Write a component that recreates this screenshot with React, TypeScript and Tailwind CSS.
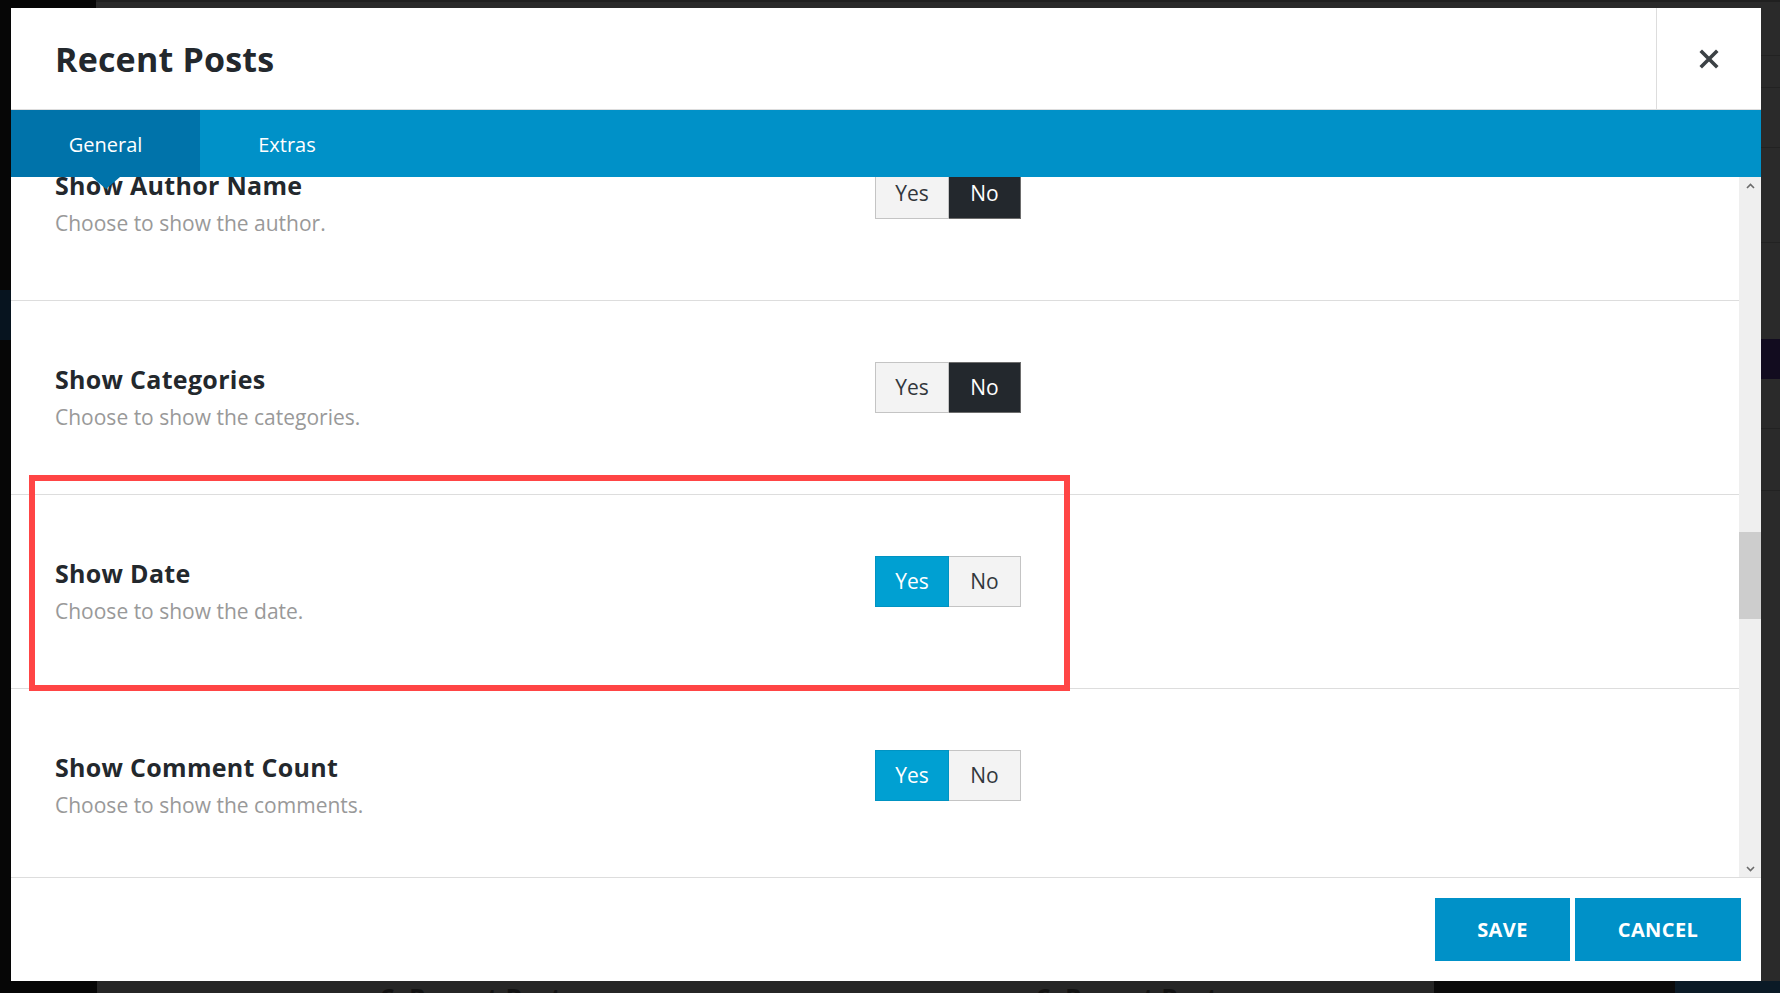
import { useState } from "react";

type Setting = { key: string; title: string; desc: string; value: boolean };

const initialSettings: Setting[] = [
    { key: "author", title: "Show Author Name", desc: "Choose to show the author.", value: false },
    { key: "categories", title: "Show Categories", desc: "Choose to show the categories.", value: false },
    { key: "date", title: "Show Date", desc: "Choose to show the date.", value: true },
    { key: "comments", title: "Show Comment Count", desc: "Choose to show the comments.", value: true },
];

function YesNo({ value, onChange }: { value: boolean; onChange: (v: boolean) => void }) {
    return (
        <div className="flex h-[51px] mt-[1px] text-[21px]">
            <button
                onClick={() => onChange(true)}
                className={
                    value
                        ? "w-[74px] h-full flex items-center justify-center bg-[#00a0d2] border border-[#0093c2] text-white"
                        : "w-[74px] h-full flex items-center justify-center bg-[#f3f3f3] border border-[#c4c4c4] text-[#32373c]"
                }
            >
                Yes
            </button>
            <button
                onClick={() => onChange(false)}
                className={
                    value
                        ? "w-[72px] h-full flex items-center justify-center bg-[#f3f3f3] border border-l-0 border-[#c4c4c4] text-[#32373c]"
                        : "w-[72px] h-full flex items-center justify-center bg-[#23282d] border border-l-0 border-[#6d6d6d] text-white"
                }
            >
                No
            </button>
        </div>
    );
}

export default function App() {
    const [tab, setTab] = useState("general");
    const [settings, setSettings] = useState(initialSettings);

    const setValue = (key: string, value: boolean) =>
        setSettings(settings.map((s) => (s.key === key ? { ...s, value } : s)));

    return (
        <div className="relative w-[1780px] h-[993px] flex flex-col bg-[#282828] overflow-hidden font-['Open_Sans',sans-serif]">
            {/* page behind the modal */}
            <div className="h-[8px] flex">
                <div className="w-[96px] bg-[#060606]" />
                <div className="flex-1 bg-[#2a2a2a] border-t-2 border-[#202020]" />
            </div>

            <div className="flex h-[973px]">
                <div className="w-[11px] flex flex-col bg-[#060606]">
                    <div className="h-[282px]" />
                    <div className="h-[50px] bg-[#07141f]" />
                </div>

                {/* modal */}
                <div className="w-[1750px] h-full flex flex-col bg-white">
                    <div className="h-[102px] flex border-b border-[#dddddd]">
                        <h1 className="flex-1 flex items-center pl-[44px] pt-[1px] text-[34px] font-bold text-[#23282d] tracking-[0.2px]">
                            Recent Posts
                        </h1>
                        <button className="w-[105px] flex items-center justify-center border-l border-[#dddddd] text-[#3c4145]">
                            <svg width="20" height="20" viewBox="0 0 20 20">
                                <path d="M3 3 L17 17 M17 3 L3 17" stroke="currentColor" strokeWidth="3.6" strokeLinecap="square" />
                            </svg>
                        </button>
                    </div>

                    <div className="relative z-10 h-[67px] flex bg-[#0091c8] text-[20px] text-white">
                        <button
                            onClick={() => setTab("general")}
                            className={
                                tab === "general"
                                    ? "relative w-[189px] h-full flex items-center justify-center pt-[2px] bg-[#0073aa]"
                                    : "relative w-[189px] h-full flex items-center justify-center pt-[2px]"
                            }
                        >
                            General
                            {tab === "general" && (
                                <span className="absolute left-1/2 -translate-x-1/2 top-full w-0 h-0 border-l-[14px] border-r-[14px] border-t-[12px] border-l-transparent border-r-transparent border-t-[#0073aa]" />
                            )}
                        </button>
                        <button
                            onClick={() => setTab("extras")}
                            className={
                                tab === "extras"
                                    ? "relative w-[174px] h-full flex items-center justify-center pt-[2px] bg-[#0073aa]"
                                    : "relative w-[174px] h-full flex items-center justify-center pt-[2px]"
                            }
                        >
                            Extras
                        </button>
                    </div>

                    <div className="h-[700px] flex overflow-hidden">
                        <div className="flex-1 overflow-hidden">
                            <div className="-mt-[70px]">
                                {settings.map((s) => (
                                    <div key={s.key} className="h-[194px] flex items-start pl-[44px] pt-[60px] border-b border-[#dddddd]">
                                        <div className="w-[820px]">
                                            <div className="text-[25px] leading-[36px] font-bold text-[#23282d] tracking-[0.3px]">{s.title}</div>
                                            <div className="mt-[5px] text-[21px] leading-[30px] text-[#999999]">{s.desc}</div>
                                        </div>
                                        <YesNo value={s.value} onChange={(v) => setValue(s.key, v)} />
                                    </div>
                                ))}
                            </div>
                        </div>

                        {/* scrollbar */}
                        <div className="relative w-[22px] flex flex-col justify-between bg-[#efefef]">
                            <div className="h-[17px] flex items-center justify-center text-[#6b6b6b]">
                                <svg width="9" height="6" viewBox="0 0 9 6">
                                    <path d="M1 5 L4.5 1.5 L8 5" fill="none" stroke="currentColor" strokeWidth="1.6" />
                                </svg>
                            </div>
                            <div className="absolute left-0 top-[355px] w-full h-[87px] bg-[#cdcdcd]" />
                            <div className="h-[17px] flex items-center justify-center text-[#6b6b6b]">
                                <svg width="9" height="6" viewBox="0 0 9 6">
                                    <path d="M1 1 L4.5 4.5 L8 1" fill="none" stroke="currentColor" strokeWidth="1.6" />
                                </svg>
                            </div>
                        </div>
                    </div>

                    <div className="h-[104px] flex justify-end items-start gap-[5px] pt-[20px] pr-[20px] border-t border-[#dddddd]">
                        <button className="w-[135px] h-[63px] bg-[#0091c8] text-white text-[20px] font-bold uppercase tracking-[0.4px]">
                            Save
                        </button>
                        <button className="w-[166px] h-[63px] bg-[#0091c8] text-white text-[20px] font-bold uppercase tracking-[0.4px]">
                            Cancel
                        </button>
                    </div>
                </div>

                <div className="flex-1 flex flex-col bg-[#2a2a2a]">
                    <div className="h-[48px] border-b border-[#222]" />
                    <div className="h-[32px] border-b border-[#222]" />
                    <div className="h-[60px] border-b border-[#222]" />
                    <div className="h-[95px] border-b border-[#222]" />
                    <div className="h-[96px]" />
                    <div className="h-[40px] bg-[#120c1f]" />
                    <div className="h-[50px] border-b border-[#222]" />
                    <div className="h-[62px] border-b border-[#222]" />
                </div>
            </div>

            <div className="h-[12px] flex overflow-hidden text-[26px] font-bold leading-none text-[#121212]">
                <div className="w-[97px] bg-[#060606]" />
                <div className="w-[1337px] flex bg-[#262626] pt-[4px]">
                    <span className="ml-[282px] w-[30px]">&#8364;</span>
                    <span>Recent Posts</span>
                    <span className="ml-[460px] w-[30px]">&#8364;</span>
                    <span>Recent Posts</span>
                </div>
                <div className="w-[241px] bg-[#0a0a0a]" />
                <div className="flex-1 bg-[#0b1a26]" />
            </div>

            {/* annotation box */}
            <div className="absolute left-[29px] top-[475px] w-[1041px] h-[216px] border-[6px] border-[#ff4545] pointer-events-none" />
        </div>
    );
}
